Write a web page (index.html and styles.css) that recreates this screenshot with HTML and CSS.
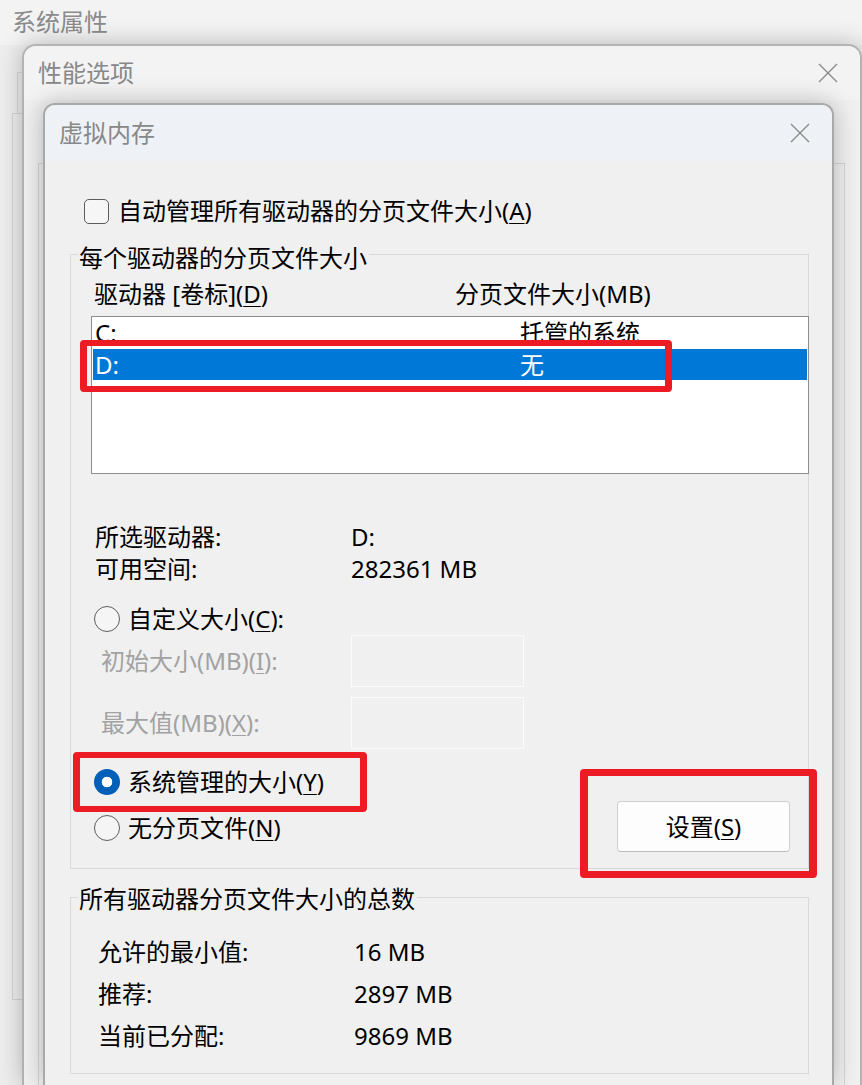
FILE: index.html
```html
<!DOCTYPE html>
<html lang="zh-CN">
<head>
<meta charset="utf-8">
<title>虚拟内存</title>
<link rel="stylesheet" href="styles.css">
</head>
<body>
<div class="win1">
  <div class="win1-title">系统属性</div>
  <div class="win1-tab"></div>
  <div class="win1-panel"></div>
</div>

<div class="win2">
  <div class="titlebar tb2">
    <span class="title">性能选项</span>
    <svg class="close" viewBox="0 0 20 20" width="20" height="20"><path d="M1 1L19 19M19 1L1 19" stroke="#8c8c8c" stroke-width="1.4" fill="none"/></svg>
  </div>
  <div class="win2-body">
    <div class="win2-panel"></div>
  </div>
</div>

<div class="win3">
  <div class="titlebar tb3">
    <span class="title">虚拟内存</span>
    <svg class="close" viewBox="0 0 20 20" width="20" height="20"><path d="M1 1L19 19M19 1L1 19" stroke="#8c8c8c" stroke-width="1.4" fill="none"/></svg>
  </div>
  <div class="body3">
    <div class="check-row"><span class="checkbox"></span><span>自动管理所有驱动器的分页文件大小(<u>A</u>)</span></div>

    <div class="group g1">
      <div class="legend">每个驱动器的分页文件大小</div>
      <div class="cols"><span class="col1">驱动器 [卷标](<u>D</u>)</span><span>分页文件大小(MB)</span></div>
      <div class="list">
        <div class="row"><span class="c1">C:</span><span>托管的系统</span></div>
        <div class="row sel"><span class="c1">D:</span><span>无</span></div>
      </div>
      <div class="info">
        <div class="kv"><span class="k">所选驱动器:</span><span>D:</span></div>
        <div class="kv"><span class="k">可用空间:</span><span>282361 MB</span></div>
      </div>
      <div class="radio-row custom"><span class="radio"></span><span>自定义大小(<u>C</u>):</span></div>
      <div class="field"><span class="fk">初始大小(MB)(<u>I</u>):</span><span class="input"></span></div>
      <div class="field f2"><span class="fk">最大值(MB)(<u>X</u>):</span><span class="input"></span></div>
      <div class="bottom">
        <div class="radios">
          <div class="radio-row"><span class="radio on"></span><span>系统管理的大小(<u>Y</u>)</span></div>
          <div class="radio-row none"><span class="radio"></span><span>无分页文件(<u>N</u>)</span></div>
        </div>
        <button class="btn">设置(<u>S</u>)</button>
      </div>
    </div>

    <div class="group g2">
      <div class="legend">所有驱动器分页文件大小的总数</div>
      <div class="totals">
        <div class="tr"><span class="tk">允许的最小值:</span><span>16 MB</span></div>
        <div class="tr"><span class="tk">推荐:</span><span>2897 MB</span></div>
        <div class="tr"><span class="tk">当前已分配:</span><span>9869 MB</span></div>
      </div>
    </div>
  </div>

  <div class="mark m1"></div>
  <div class="mark m2"></div>
  <div class="mark m3"></div>
</div>
</body>
</html>
```

FILE: styles.css
```css
* { box-sizing: border-box; }
html, body { margin: 0; padding: 0; }
body {
  width: 862px;
  height: 1085px;
  overflow: hidden;
  position: relative;
  background: #eeeeee;
  font-family: "Noto Sans", "Noto Sans CJK SC", sans-serif;
  font-size: 24px;
  color: #000;
}
u { text-decoration: underline; text-decoration-thickness: 1px; text-underline-offset: 3px; }

/* window 1 (background) */
.win1 { position: absolute; inset: 0; overflow: hidden; }
.win1-title {
  height: 45px;
  padding-left: 12px;
  line-height: 44px;
  color: #8b8b8b;
  background: #f3f3f3;
}
.win1-tab {
  margin-left: 17px;
  margin-top: 27px;
  height: 41px;
  border-left: 1px solid #d6d6d6;
  border-top: 1px solid #d6d6d6;
}
.win1-panel {
  margin-left: 12px;
  height: 887px;
  border: 1px solid #d3d3d3;
}

/* window 2 */
.win2 {
  position: absolute;
  left: 22px;
  top: 44px;
  width: 840px;
  height: 1041px;
  border: 2px solid #b3b3b3;
  border-bottom: none;
  border-radius: 14px 14px 0 0;
  background: #f0f0f0;
  box-shadow: 0 0 24px rgba(0, 0, 0, 0.25);
  overflow: hidden;
}
.titlebar {
  display: flex;
  align-items: center;
  justify-content: space-between;
  color: #888888;
}
.tb2 {
  height: 54px;
  padding: 0 22px 0 14px;
  background: #f3f3f3;
}
.title { line-height: 32px; }
.close { display: block; }
.win2-body { height: 985px; padding-top: 63px; padding-left: 14px; }
.win2-panel {
  width: 807px;
  height: 922px;
  border: 1px solid #d4d4d4;
  border-bottom: none;
}

/* window 3 */
.win3 {
  position: absolute;
  left: 43px;
  top: 103px;
  width: 791px;
  height: 982px;
  border: 2px solid #a9a9a9;
  border-bottom: none;
  border-radius: 12px 12px 0 0;
  background: #f0f0f0;
  box-shadow: 0 0 24px rgba(0, 0, 0, 0.25);
}
.tb3 {
  height: 56px;
  padding: 0 22px 0 14px;
  background: #eef2f6;
  border-radius: 10px 10px 0 0;
}
.body3 { display: flex; flex-direction: column; }

.check-row {
  display: flex;
  align-items: center;
  gap: 9px;
  height: 28px;
  margin-top: 36px;
  padding-left: 39px;
  line-height: 28px;
}
.checkbox {
  width: 25px;
  height: 25px;
  border: 1.5px solid #5c5c5c;
  border-radius: 5px;
  background: #f6f6f6;
}

.group {
  margin-left: 25px;
  width: 739px;
  border: 1px solid #d9d9d9;
  display: flex;
  flex-direction: column;
}
.g1 { margin-top: 29px; padding-bottom: 16px; }
.g2 { margin-top: 28px; padding-bottom: 16px; }
.legend {
  width: fit-content;
  margin-left: 7px;
  padding: 0 2px 0 1px;
  line-height: 32px;
  background: #f0f0f0;
}
.g1 .legend { margin-top: -13px; }
.g2 .legend { margin-top: -15px; }

.cols {
  display: flex;
  height: 32px;
  line-height: 32px;
  margin-top: 4px;
  padding-left: 23px;
}
.col1 { width: 361px; }

.list {
  margin: 6px -1px 0 20px;
  height: 158px;
  border: 1px solid #8e8e8e;
  background: #ffffff;
  padding: 0 1px;
}
.row {
  display: flex;
  height: 32px;
  line-height: 32px;
  padding-left: 2px;
}
.row.sel { height: 31px; line-height: 31px; background: #0078d7; color: #ffffff; }
.c1 { width: 425px; }

.info { margin-top: 47px; padding-left: 24px; }
.kv { display: flex; line-height: 32px; height: 32px; }
.k { width: 256px; }

.radio-row {
  display: flex;
  align-items: center;
  gap: 8px;
  height: 32px;
  line-height: 32px;
  padding-left: 23px;
}
.custom { margin-top: 18px; }
.none { margin-top: 14px; }
.radio {
  width: 26px;
  height: 26px;
  border-radius: 50%;
  border: 1.5px solid #5e5e5e;
  background: #f5f5f5;
}
.radio.on {
  border: none;
  background: radial-gradient(circle, #ffffff 0 5px, #005fb8 5.6px);
}

.field {
  display: flex;
  align-items: center;
  height: 52px;
  padding-left: 30px;
  color: #a2a2a2;
}
.f2 { margin-top: 10px; }
.fk { width: 250px; line-height: 32px; }
.input {
  width: 173px;
  height: 52px;
  border: 1px solid #fbfbfb;
  background: #f0f0f0;
}

.bottom { display: flex; margin-top: 17px; }
.btn {
  margin: 35px 18px 0 auto;
  width: 173px;
  height: 51px;
  padding: 0;
  font: inherit;
  color: #000;
  line-height: 32px;
  background: #fdfdfd;
  border: 1px solid #d0d0d0;
  border-bottom-color: #bdbdbd;
  border-radius: 4px;
}

.totals { margin-top: 16px; padding-left: 27px; }
.tr { display: flex; height: 42px; line-height: 42px; }
.tk { width: 256px; }

/* red annotation boxes */
.mark {
  position: absolute;
  border: 6px solid #ed1c24;
  border-radius: 4px;
}
.m1 { left: 35px; top: 235px; width: 592px; height: 52px; border-width: 6px 7px; }
.m2 { left: 28px; top: 647px; width: 294px; height: 60px; border-width: 6px 7px; }
.m3 { left: 535px; top: 664px; width: 237px; height: 109px; border-width: 7px 8px; }
```
